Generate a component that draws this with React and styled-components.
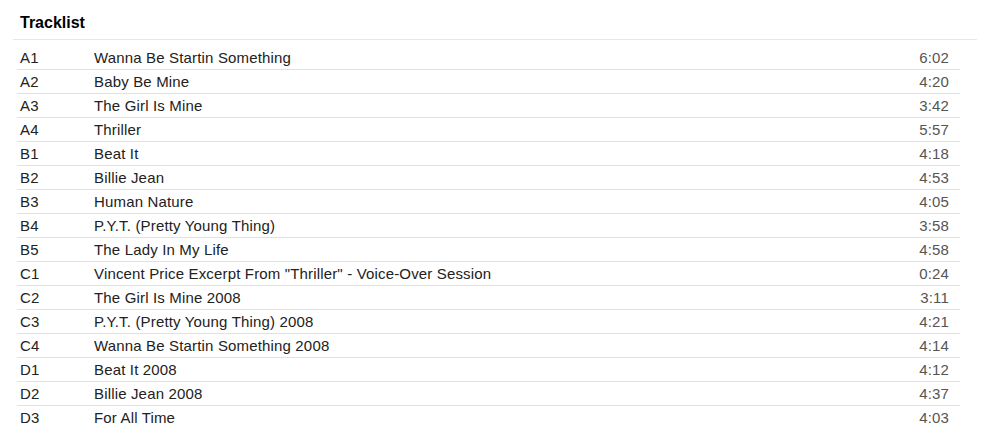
import React from "react";
import styled, { createGlobalStyle } from "styled-components";

const tracks = [
  ["A1", "Wanna Be Startin Something", "6:02"],
  ["A2", "Baby Be Mine", "4:20"],
  ["A3", "The Girl Is Mine", "3:42"],
  ["A4", "Thriller", "5:57"],
  ["B1", "Beat It", "4:18"],
  ["B2", "Billie Jean", "4:53"],
  ["B3", "Human Nature", "4:05"],
  ["B4", "P.Y.T. (Pretty Young Thing)", "3:58"],
  ["B5", "The Lady In My Life", "4:58"],
  ["C1", 'Vincent Price Excerpt From "Thriller" - Voice-Over Session', "0:24"],
  ["C2", "The Girl Is Mine 2008", "3:11"],
  ["C3", "P.Y.T. (Pretty Young Thing) 2008", "4:21"],
  ["C4", "Wanna Be Startin Something 2008", "4:14"],
  ["D1", "Beat It 2008", "4:12"],
  ["D2", "Billie Jean 2008", "4:37"],
  ["D3", "For All Time", "4:03"],
];

export default function App() {
  return (
    <>
      <GlobalStyle />
      <Section>
        <Heading>Tracklist</Heading>
        <List>
          {tracks.map(([pos, title, duration], i) => (
            <Row key={pos} $last={i === tracks.length - 1}>
              <Position>{pos}</Position>
              <Title>{title}</Title>
              <Duration>{duration}</Duration>
            </Row>
          ))}
        </List>
      </Section>
    </>
  );
}

const GlobalStyle = createGlobalStyle`
  body {
    margin: 0;
    background: #fff;
    font-family: "Liberation Sans", Arial, sans-serif;
  }
`;

const Section = styled.div`
  width: 964px;
  margin-left: 13px;
`;

const Heading = styled.h3`
  margin: 0;
  height: 40px;
  padding: 14px 0 0 7px;
  box-sizing: border-box;
  font-size: 16px;
  line-height: 18px;
  font-weight: bold;
  color: #000;
  border-bottom: 1px solid #e8e8e8;
`;

const List = styled.div`
  width: 943px;
  margin: 6px 0 0 4px;
`;

const Row = styled.div`
  display: flex;
  align-items: center;
  height: 24px;
  box-sizing: border-box;
  border-bottom: 1px solid ${(props) => (props.$last ? "transparent" : "#e2e2e2")};
  font-size: 15px;
  letter-spacing: 0.16px;
  color: #222;
`;

const Position = styled.div`
  width: 77px;
  padding-left: 3px;
  box-sizing: border-box;
  flex-shrink: 0;
`;

const Title = styled.div`
  flex: 1;
`;

const Duration = styled.div`
  padding-right: 11px;
  color: #555;
`;
